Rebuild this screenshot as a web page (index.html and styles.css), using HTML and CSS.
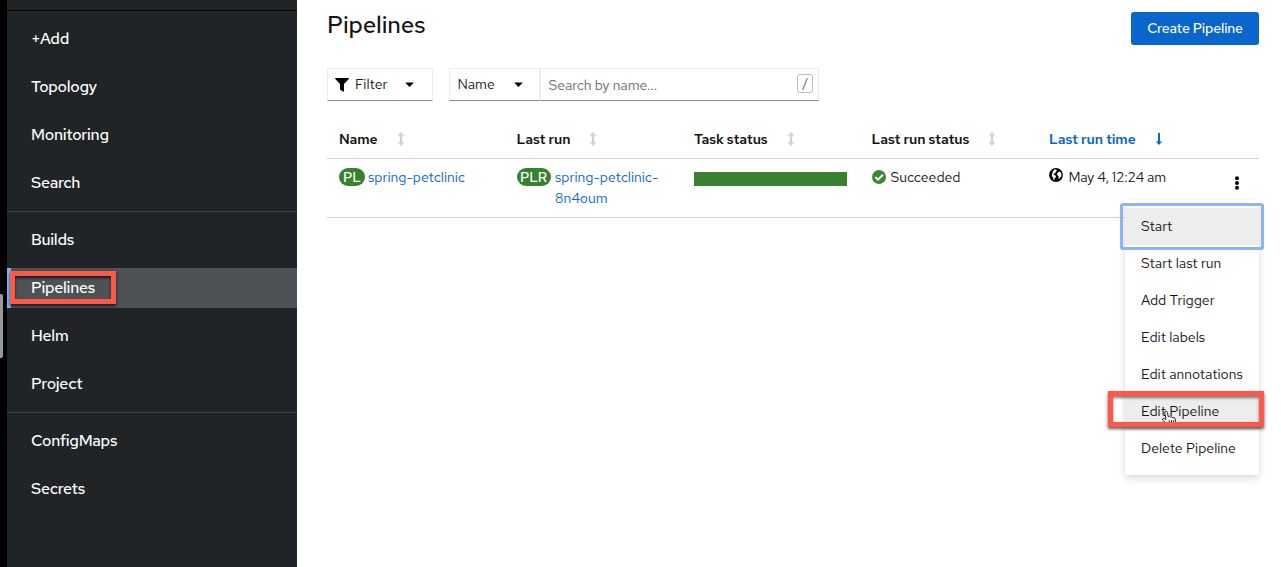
FILE: index.html
```html
<!DOCTYPE html>
<html lang="en">
<head>
<meta charset="utf-8">
<title>Pipelines</title>
<link rel="stylesheet" href="styles.css">
</head>
<body>
<svg class="defs" width="0" height="0" aria-hidden="true">
  <symbol id="sort" viewBox="0 0 8 14"><path d="M4 0 7.400 3.700H5.200V10.300H7.400L4 14 .6 10.300H2.800V3.700H.6Z"/></symbol>
  <symbol id="caret" viewBox="0 0 10 6"><path d="M1 .5h8q.8 0 .3.7L5.600 5q-.6.5-1.200 0L.7 1.200Q.2.5 1 .5Z"/></symbol>
</svg>
<div class="app">
  <div class="rail"><div class="thumb"></div></div>
  <nav class="sidebar">
    <div class="sidebar-top"></div>
    <div class="group">
      <a class="nav">+Add</a>
      <a class="nav">Topology</a>
      <a class="nav">Monitoring</a>
      <a class="nav">Search</a>
    </div>
    <div class="group">
      <a class="nav">Builds</a>
      <a class="nav active">Pipelines<span class="mark mark-nav"></span></a>
      <a class="nav">Helm</a>
      <a class="nav">Project</a>
    </div>
    <div class="group">
      <a class="nav">ConfigMaps</a>
      <a class="nav">Secrets</a>
    </div>
  </nav>
  <main class="main">
    <header class="head">
      <h1 class="title">Pipelines</h1>
      <button class="create">Create Pipeline</button>
    </header>
    <div class="toolbar">
      <div class="control filter">
        <svg width="14" height="14" viewBox="0 0 14 14"><path d="M.6 0h12.800q.9.300.3 1.100L9 6v7q-.2 1-1.100.6L5.400 11.800Q5 11.500 5 11V6L.3 1.100Q-.3.300.6 0Z"/></svg>
        <span class="filter-text">Filter</span>
        <svg width="9" height="5.400"><use href="#caret"/></svg>
      </div>
      <div class="control name">
        <span>Name</span>
        <svg width="9" height="5.400"><use href="#caret"/></svg>
      </div>
      <div class="control search">
        <span class="placeholder">Search by name...</span>
        <kbd class="key">/</kbd>
      </div>
    </div>
    <div class="table">
      <div class="row thead">
        <div class="cell">Name<svg class="sort" width="8" height="14"><use href="#sort"/></svg></div>
        <div class="cell">Last run<svg class="sort" width="8" height="14"><use href="#sort"/></svg></div>
        <div class="cell">Task status<svg class="sort" width="8" height="14"><use href="#sort"/></svg></div>
        <div class="cell">Last run status<svg class="sort" width="8" height="14"><use href="#sort"/></svg></div>
        <div class="cell sorted">Last run time<svg class="sort" width="8" height="14" viewBox="0 0 8 14"><path d="M3 1h2v8.400h2.200L4 13 .8 9.400H3Z"/></svg></div>
        <div></div>
      </div>
      <div class="row tbody">
        <div class="cell"><span class="badge pl">PL</span><a class="link">spring-petclinic</a></div>
        <div class="cell"><span class="badge plr">PLR</span><a class="link">spring-petclinic-<br>8n4oum</a></div>
        <div class="cell"><div class="bar"></div></div>
        <div class="cell"><svg class="ok" width="14" height="14" viewBox="0 0 14 14"><circle cx="7" cy="7" r="7" fill="#3e8635"/><path d="M3.300 7.100 6 9.700 10.900 4.700" fill="none" stroke="#fff" stroke-width="2"/></svg><span>Succeeded</span></div>
        <div class="cell"><svg class="globe" width="14" height="14" viewBox="0 0 14 14"><circle cx="7" cy="7" r="6.900"/><path d="M5.200 1.600 7.400 1.400 7.900 2.300 6.900 3.500 6.500 4.800 5 5.600 4.600 6.700 6.500 7.600 7 9 5.700 10.200 5.300 12.200 4.600 12 4 9.300 2.800 8 3 6.300 3.600 4.300Z" fill="#fff"/><path d="M9.200 4.300 10.500 3.500 11.700 4.500 12.500 6.500 12.200 8.400 11 9.800 10.100 10.900 9.400 9.300 9.500 7.900 8.200 7.200 8.100 5.700Z" fill="#fff"/></svg><span class="time">May 4, 12:24 am</span></div>
        <div class="actions">
          <svg width="6" height="14" viewBox="0 0 6 14"><circle cx="3" cy="2.200" r="2"/><circle cx="3" cy="7" r="2"/><circle cx="3" cy="11.800" r="2"/></svg>
          <div class="menu">
            <div class="item focused">Start</div>
            <div class="item">Start last run</div>
            <div class="item">Add Trigger</div>
            <div class="item">Edit labels</div>
            <div class="item">Edit annotations</div>
            <div class="item hovered">Edit Pipeline
              <svg class="cursor" width="16" height="18" viewBox="0 0 16 18"><path d="M5 9.500 3.800 2.800Q3.700 1.300 4.900 1.200T6.400 2.500L7.200 6.500Q8.700 5.800 9.400 7.100 11 6.400 11.600 7.600 13.800 7 14.200 9L14.500 12Q14.500 14 13.500 15V16.500H7.500V15.300L4.200 12.200 1.600 10Q1.200 8.700 2.300 8.400 3.300 8.300 5 9.500Z" fill="#fff" stroke="#222"/><path d="M8.200 10.200l.2 3M10.300 10.200l.2 3M12.300 10.200l.2 3" stroke="#222"/></svg>
              <span class="mark mark-menu"></span>
            </div>
            <div class="item">Delete Pipeline</div>
          </div>
        </div>
      </div>
    </div>
  </main>
</div>
</body>
</html>
```
FILE: styles.css
```css
*, *::after { box-sizing: border-box; }
body {
  margin: 0;
  background: #fff;
  color: #151515;
  font: 14px/21px "Red Hat Text", Lato, sans-serif;
  overflow: hidden;
}
svg { display: block; flex: none; }
.defs { position: absolute; }
.app { display: flex; height: 567px; }

.rail { width: 7px; background: #000; padding-top: 294px; }
.thumb { width: 3px; height: 64px; background: #999; border-radius: 0 2px 2px 0; }
.sidebar { width: 290px; background: #212427; }
.sidebar-top { height: 11px; border-bottom: 1px solid #030303; }
.group {
  display: flex;
  flex-direction: column;
  gap: 8px;
  padding: 8px 0;
  border-bottom: 1px solid #3c3f42;
}
.group:last-child { border-bottom: 0; }
.nav {
  position: relative;
  height: 40px;
  padding-left: 24px;
  color: #fff;
  font-size: 16px;
  font-weight: 500;
  line-height: 40px;
  letter-spacing: -.27px;
}
.active { background: #4f5255; box-shadow: inset 4px 0 #73bcf7; }
.mark { position: absolute; border: 5px solid #fd5949; z-index: 2; }
.mark-nav {
  left: 3px; top: 3px; width: 106px; height: 33px;
  box-shadow: 0 2px 3px rgba(0,0,0,.7), inset 0 2px 3px rgba(0,0,0,.7);
}

.main { flex: 1; padding: 12px 22px 0 30px; }
.head { display: flex; justify-content: space-between; height: 56px; }
.title { margin: -3px 0 0; font-size: 24px; font-weight: 500; line-height: 31px; letter-spacing: -.15px; }
.create {
  width: 128px; height: 33px; padding: 0;
  border: 0; border-radius: 3px;
  background: #0866cc; color: #fff;
  font: inherit; font-weight: 500; letter-spacing: -.17px;
}
.toolbar { display: flex; height: 33px; }
.control {
  display: flex;
  align-items: center;
  height: 33px;
  border: 1px solid #ededed;
  border-bottom-color: #8a8d90;
}
.filter { width: 106px; margin-right: 16px; padding: 0 7px; }
.filter-text { width: 50px; margin-left: 6px; }
.name { width: 91px; padding: 0 16px 0 7.500px; justify-content: space-between; }
.search { width: 279px; padding: 0 5px 0 7.500px; justify-content: space-between; }
.placeholder { color: #6a6e73; padding-top: 2px; letter-spacing: -.05px; }
.key {
  width: 16px; height: 19px; margin-top: -2px;
  border: 1px solid #b8bbbe; border-radius: 3px;
  color: #6a6e73; text-align: center;
  font: 15px/17px Lato, sans-serif;
}

.row {
  display: grid;
  grid-template-columns: repeat(5, 177.5px) 1fr;
  border-bottom: 1px solid #d2d2d2;
}
.cell { display: flex; padding-left: 12px; }
.thead { height: 58px; padding-top: 28px; font-weight: 600; }
.thead .cell { letter-spacing: -.08px; }
.sort { margin: 3px 0 0 19px; fill: #d2d2d2; }
.sorted { color: #0866cc; }
.sorted .sort { fill: #0866cc; }
.tbody { height: 59px; padding-top: 8px; }
.badge {
  height: 18px; margin: 1px 3px 0 0;
  border-radius: 9px;
  background: #38812f; color: #fff;
  font-weight: 500; line-height: 18px; text-align: center;
}
.pl { width: 26px; }
.plr { width: 34px; margin-right: 4.500px; }
.link { color: #0866cc; }
.bar { width: 153px; height: 14px; margin-top: 5px; background: #38812f; }
.ok { margin: 3px 5px 0 0; }
.globe { margin: 1px 5.500px 0 0; }
.time { letter-spacing: -.18px; }
.actions { position: relative; padding: 9px 0 0 19.500px; }
.menu {
  position: absolute;
  top: 33px; right: 0;
  width: 134px; height: 275px;
  padding-top: 8px;
  background: #fff;
  box-shadow: 0 4px 8px rgba(3,3,3,.12), 0 0 4px rgba(3,3,3,.06);
}
.item { position: relative; height: 37px; padding-left: 16px; line-height: 37px; white-space: nowrap; }
.focused { background: #ededed; }
.focused::after {
  content: "";
  position: absolute;
  left: -5px; top: -5px; width: 144px; height: 47px;
  border: 3px solid #8bb5f8; border-radius: 3px;
}
.hovered { background: #ededed; }
.cursor { position: absolute; left: 36px; top: 17px; }
.mark-menu {
  left: -17px; top: -2px; width: 156px; height: 36px;
  box-shadow: 0 2px 3px rgba(0,0,0,.65), inset 0 2px 3px rgba(0,0,0,.5);
}
```
